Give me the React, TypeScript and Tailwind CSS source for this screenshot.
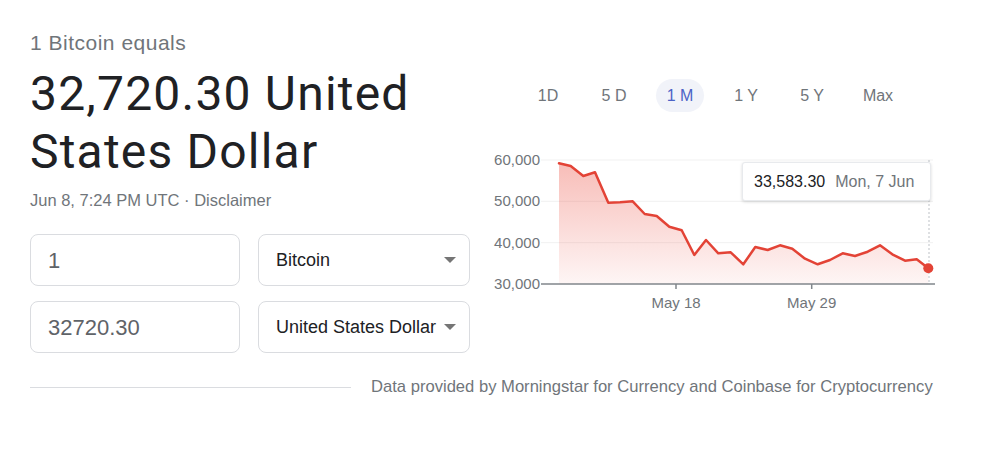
import React from 'react';

const points: [number, number][] = [
  [559, 163.3], [570.7, 166], [583.3, 176], [595, 172.3], [608.3, 202.7], [620, 202.3],
  [632.7, 201.3], [644.7, 214], [656.7, 216], [669.3, 226.7], [681.7, 230.3], [694.3, 255],
  [706, 240], [718.3, 253.3], [730.7, 252.3], [743.3, 264.3], [755.3, 247], [767.7, 250],
  [780, 245.3], [792.3, 248.7], [805, 258.7], [817.7, 264.3], [830, 260], [842.7, 253.3],
  [855, 256], [867.7, 251.7], [880, 245.3], [892.3, 254.3], [905, 260.7], [916.7, 259.3],
  [928.3, 268.3],
];

const ranges = ['1D', '5 D', '1 M', '1 Y', '5 Y', 'Max'];

const gridLines = [
  { y: 160, label: '60,000' },
  { y: 201.3, label: '50,000' },
  { y: 242.7, label: '40,000' },
  { y: 284, label: '30,000' },
];

function Chart() {
  const line = points.map(([x, y], i) => `${i === 0 ? 'M' : 'L'}${x} ${y}`).join(' ');
  const area = `${line} L928.3 284 L559 284 Z`;

  return (
    <div className="relative mt-[38px] h-[165px] w-[450px]">
      <svg width="450" height="165" viewBox="490 150 450 165" className="block">
        <defs>
          <linearGradient id="fill" x1="0" y1="0" x2="0" y2="1">
            <stop offset="0%" stopColor="#ea4335" stopOpacity="0.35" />
            <stop offset="100%" stopColor="#ea4335" stopOpacity="0.05" />
          </linearGradient>
        </defs>
        {gridLines.slice(0, 3).map((g) => (
          <line key={g.y} x1="541" x2="933" y1={g.y} y2={g.y} stroke="#f1f1f1" strokeWidth="1" />
        ))}
        {gridLines.map((g) => (
          <text
            key={g.label}
            x="540"
            y={g.y + 5}
            textAnchor="end"
            fontSize="15"
            fill="#70757a"
            fontFamily="'Liberation Sans', Arial, sans-serif"
          >
            {g.label}
          </text>
        ))}
        <path d={area} fill="url(#fill)" />
        <line x1="929" x2="929" y1="160" y2="284" stroke="#bdc1c6" strokeWidth="1" strokeDasharray="2 2" />
        <path d={line} fill="none" stroke="#e34336" strokeWidth="2.5" strokeLinejoin="round" strokeLinecap="round" />
        <line x1="541" x2="935" y1="284" y2="284" stroke="#80868b" strokeWidth="1.5" />
        <line x1="676" x2="676" y1="284" y2="289" stroke="#80868b" strokeWidth="1.5" />
        <line x1="811.7" x2="811.7" y1="284" y2="289" stroke="#80868b" strokeWidth="1.5" />
        <text x="676" y="308" textAnchor="middle" fontSize="15" fill="#70757a" fontFamily="'Liberation Sans', Arial, sans-serif">
          May 18
        </text>
        <text x="811.7" y="308" textAnchor="middle" fontSize="15" fill="#70757a" fontFamily="'Liberation Sans', Arial, sans-serif">
          May 29
        </text>
        <circle cx="928.3" cy="268.3" r="5" fill="#e34336" />
      </svg>

      {/* tooltip */}
      <div className="absolute left-[252px] top-[12px] flex h-[39px] w-[189px] items-center gap-[10px] rounded-[3px] border border-[#e8eaed] bg-white pl-[11px] text-[16px] shadow-[0_1px_3px_rgba(60,64,67,0.2)]">
        <span className="text-[#202124]">33,583.30</span>
        <span className="text-[#70757a]">Mon, 7 Jun</span>
      </div>
    </div>
  );
}

function Field({ value }: { value: string }) {
  return (
    <div className="flex h-[52px] w-[210px] items-center rounded-[8px] border border-[#dadce0] pl-[17px] text-[22px] text-[#5f6368]">
      {value}
    </div>
  );
}

function Picker({ label }: { label: string }) {
  return (
    <div className="flex h-[52px] w-[212px] items-center justify-between rounded-[8px] border border-[#dadce0] pl-[17px] pr-[13px] text-[18px] text-[#202124]">
      <span className="whitespace-nowrap">{label}</span>
      <span className="h-0 w-0 border-x-[6px] border-t-[6px] border-x-transparent border-t-[#757575]" />
    </div>
  );
}

export default function App() {
  return (
    <div className="h-[449px] w-[1000px] bg-white font-['Liberation_Sans',Arial,sans-serif]">
      <div className="flex pl-[30px] pt-[31px]">
        {/* left column */}
        <div className="flex w-[440px] flex-col">
          <div className="text-[21px] leading-[24px] tracking-[0.5px] text-[#70757a]">1 Bitcoin equals</div>
          <div className="mt-[10px] font-['Roboto',sans-serif] text-[48px] leading-[58px] tracking-[1.2px] text-[#202124]">
            32,720.30 United
            <br />
            States Dollar
          </div>
          <div className="mt-[9px] text-[16.5px] leading-[20px] text-[#70757a]">
            Jun 8, 7:24 PM UTC · Disclaimer
          </div>
          <div className="mt-[24px] flex flex-col gap-[15px]">
            <div className="flex gap-[18px]">
              <Field value="1" />
              <Picker label="Bitcoin" />
            </div>
            <div className="flex gap-[18px]">
              <Field value="32720.30" />
              <Picker label="United States Dollar" />
            </div>
          </div>
        </div>

        {/* right column */}
        <div className="ml-[20px] flex flex-col">
          <div className="ml-[25px] mt-[48px] flex h-[33px]">
            {ranges.map((r) => (
              <div key={r} className="flex w-[66px] items-center justify-center">
                <span
                  className={
                    r === '1 M'
                      ? 'flex h-[33px] w-[48px] items-center justify-center rounded-full bg-[#f1f3f9] text-[16px] text-[#4c63c6]'
                      : 'text-[16px] text-[#70757a]'
                  }
                >
                  {r}
                </span>
              </div>
            ))}
          </div>
          <Chart />
        </div>
      </div>

      {/* footer */}
      <div className="mt-[22px] flex items-center pl-[30px]">
        <div className="h-px w-[321px] bg-[#dadce0]" />
        <div className="ml-[20px] whitespace-nowrap text-[16.6px] text-[#70757a]">
          Data provided by Morningstar for Currency and Coinbase for Cryptocurrency
        </div>
      </div>
    </div>
  );
}
